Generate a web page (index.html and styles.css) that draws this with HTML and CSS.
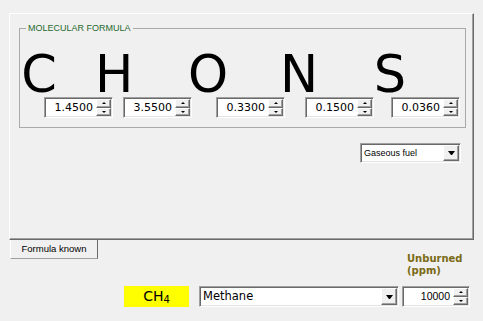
FILE: index.html
```html
<!DOCTYPE html>
<html lang="en">
<head>
    <meta charset="UTF-8">
    <meta name="viewport" content="width=device-width, initial-scale=1.0">
    <title>Fuel composition</title>
    <link rel="stylesheet" href="styles.css">
</head>
<body>

    <div class="tab-page">
        <fieldset class="formula-group">
            <legend>MOLECULAR FORMULA</legend>

            <div class="elements">
                <span class="element el-c">C</span>
                <span class="element el-h">H</span>
                <span class="element el-o">O</span>
                <span class="element el-n">N</span>
                <span class="element el-s">S</span>
            </div>

            <div class="amounts">
                <div class="spin amount-c">
                    <span class="spin-value">1.4500</span>
                    <span class="spin-buttons"><span class="spin-btn up"></span><span class="spin-btn down"></span></span>
                </div>
                <div class="spin amount-h">
                    <span class="spin-value">3.5500</span>
                    <span class="spin-buttons"><span class="spin-btn up"></span><span class="spin-btn down"></span></span>
                </div>
                <div class="spin amount-o">
                    <span class="spin-value">0.3300</span>
                    <span class="spin-buttons"><span class="spin-btn up"></span><span class="spin-btn down"></span></span>
                </div>
                <div class="spin amount-n">
                    <span class="spin-value">0.1500</span>
                    <span class="spin-buttons"><span class="spin-btn up"></span><span class="spin-btn down"></span></span>
                </div>
                <div class="spin amount-s">
                    <span class="spin-value">0.0360</span>
                    <span class="spin-buttons"><span class="spin-btn up"></span><span class="spin-btn down"></span></span>
                </div>
            </div>
        </fieldset>

        <div class="fuel-type-row">
            <div class="combo fuel-type">
                <span class="combo-text">Gaseous fuel</span>
                <span class="combo-btn"></span>
            </div>
        </div>
    </div>

    <div class="tab-strip">
        <div class="tab">Formula known</div>
        <div class="unburned-label">
            <span>Unburned</span>
            <span>(ppm)</span>
        </div>
    </div>

    <div class="fuel-line">
        <div class="formula-badge">CH<sub>4</sub></div>
        <div class="combo fuel-name">
            <span class="combo-text">Methane</span>
            <span class="combo-btn"></span>
        </div>
        <div class="spin unburned">
            <span class="spin-value">10000</span>
            <span class="spin-buttons"><span class="spin-btn up"></span><span class="spin-btn down"></span></span>
        </div>
    </div>

</body>
</html>
```

FILE: styles.css
```css
body {
    margin: 0;
    background-color: #f0f0f0;
    font-family: "Liberation Sans", Arial, sans-serif;
    color: #000;
}

/* tab page with 3D edge */
.tab-page {
    box-sizing: border-box;
    width: 465px;
    height: 227px;
    margin: 13px 0 0 9px;
    border-top: 1px solid #fff;
    border-left: 1px solid #fff;
    border-right: 1px solid #696969;
    border-bottom: 1px solid #696969;
    box-shadow: inset -1px -1px #a0a0a0;
}

.formula-group {
    box-sizing: border-box;
    width: 447px;
    margin: 8px 0 0 9px;
    padding: 0 0 9px 0;
    border: 1px solid #a9a9a9;
    min-inline-size: 0;
}
.formula-group legend {
    margin-left: 6px;
    padding: 0 2px;
    font-size: 9px;
    line-height: 12px;
    color: #1f6a2c;
}

.elements {
    display: flex;
    height: 44px;
    margin-top: 19px;
}
.element {
    width: 38px;
    text-align: center;
    font-family: "DejaVu Sans", Verdana, sans-serif;
    font-size: 51px;
    line-height: 44px;
}
.el-h { margin-left: 37px; }
.el-o { margin-left: 55px; }
.el-n { margin-left: 54px; }
.el-s { margin-left: 53px; }

.amounts {
    display: flex;
}
.amount-c { margin-left: 24px; }
.amount-h { margin-left: 10px; }
.amount-o { margin-left: 24px; }
.amount-n { margin-left: 20px; }
.amount-s { margin-left: 17px; }

/* numeric up-down */
.spin {
    display: flex;
    box-sizing: border-box;
    width: 69px;
    height: 21px;
    padding: 1px;
    background-color: #fff;
    border: 1px solid;
    border-color: #a0a0a0 #fff #fff #a0a0a0;
    box-shadow: inset 1px 1px #696969, inset -1px -1px #e3e3e3;
}
.spin-value {
    flex-grow: 1;
    padding-right: 3px;
    text-align: right;
    font-family: "DejaVu Sans", Verdana, sans-serif;
    font-size: 11px;
    line-height: 17px;
}
.spin-buttons {
    display: flex;
    flex-direction: column;
    width: 15px;
}
.spin-btn {
    flex: 1;
    display: flex;
    align-items: center;
    justify-content: center;
    background-color: #f0f0f0;
    border: 1px solid;
    border-color: #fff #696969 #696969 #fff;
    box-shadow: inset -1px -1px #a0a0a0;
}
.spin-btn::before {
    content: "";
    border-left: 2px solid transparent;
    border-right: 2px solid transparent;
}
.spin-btn.up::before { border-bottom: 2px solid #000; }
.spin-btn.down::before { border-top: 2px solid #000; }

/* combo box */
.combo {
    display: flex;
    box-sizing: border-box;
    padding: 1px;
    background-color: #fff;
    border: 1px solid;
    border-color: #a0a0a0 #fff #fff #a0a0a0;
    box-shadow: inset 1px 1px #696969, inset -1px -1px #e3e3e3;
}
.combo-text {
    flex-grow: 1;
    padding-left: 2px;
}
.combo-btn {
    display: flex;
    align-items: center;
    justify-content: center;
    box-sizing: border-box;
    width: 16px;
    background-color: #f0f0f0;
    border: 1px solid;
    border-color: #fff #696969 #696969 #fff;
    box-shadow: inset -1px -1px #a0a0a0;
}
.combo-btn::before {
    content: "";
    width: 1px;
    border-left: 3px solid transparent;
    border-right: 3px solid transparent;
    border-top: 4px solid #000;
}

.fuel-type-row {
    display: flex;
    justify-content: flex-end;
    margin-top: 15px;
    padding-right: 12px;
}
.fuel-type {
    width: 101px;
    height: 20px;
}
.fuel-type .combo-text {
    font-size: 9px;
    line-height: 16px;
}

/* bottom tab + label */
.tab-strip {
    display: flex;
    align-items: flex-start;
}
.tab {
    box-sizing: border-box;
    width: 88px;
    height: 19px;
    margin-left: 10px;
    border-left: 1px solid #fff;
    border-right: 1px solid #696969;
    border-bottom: 1px solid #a0a0a0;
    font-size: 9.5px;
    line-height: 17px;
    text-align: center;
}
.unburned-label {
    display: flex;
    flex-direction: column;
    box-sizing: border-box;
    width: 68px;
    margin: 13px 13px 0 auto;
    padding-left: 5px;
    font-family: "DejaVu Sans", Verdana, sans-serif;
    font-weight: bold;
    font-size: 10px;
    line-height: 12px;
    color: #7a6a14;
}

.fuel-line {
    display: flex;
    margin-top: 9px;
}
.formula-badge {
    width: 65px;
    height: 21px;
    margin-left: 124px;
    background-color: #ffff00;
    font-family: "DejaVu Sans", Verdana, sans-serif;
    font-size: 14px;
    line-height: 21px;
    text-align: center;
}
.formula-badge sub {
    font-size: 10px;
    line-height: 0;
    vertical-align: -2px;
}
.fuel-name {
    width: 200px;
    height: 21px;
    margin-left: 10px;
}
.fuel-name .combo-text {
    font-family: "DejaVu Sans", Verdana, sans-serif;
    font-size: 11.5px;
    line-height: 17px;
}
.unburned {
    width: 68px;
    margin-left: 3px;
}
.unburned .spin-value {
    font-family: "Liberation Sans", Arial, sans-serif;
    font-size: 10.5px;
}
```
